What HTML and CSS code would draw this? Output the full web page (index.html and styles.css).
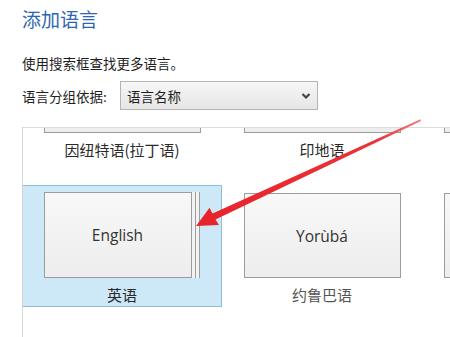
FILE: index.html
```html
<html>
    <head>
        <link rel="stylesheet" href="styles.css">
    </head>
    <body>
        <h1 class="title">添加语言</h1>
        <p class="hint">使用搜索框查找更多语言。</p>
        <div class="group_row">
            <span class="group_label">语言分组依据:</span>
            <div class="select">
                <span>语言名称</span>
                <svg class="chevron" width="10" height="8" viewBox="0 0 10 8">
                    <polyline points="1.5,2 5,5.5 8.5,2" fill="none" stroke="#444" stroke-width="2.2"/>
                </svg>
            </div>
        </div>

        <div class="lang_list">
            <div class="lang_grid">
                <div class="tile">
                    <div class="card"></div>
                    <div class="name">因纽特语(拉丁语)</div>
                </div>
                <div class="tile">
                    <div class="card"></div>
                    <div class="name">印地语</div>
                </div>
                <div class="tile">
                    <div class="card"></div>
                    <div class="name"></div>
                </div>
                <div class="tile selected">
                    <div class="card stacked">English</div>
                    <div class="name">英语</div>
                </div>
                <div class="tile">
                    <div class="card">Yorùbá</div>
                    <div class="name faded">约鲁巴语</div>
                </div>
                <div class="tile">
                    <div class="card"></div>
                    <div class="name"></div>
                </div>
            </div>
        </div>

        <!-- red arrow drawn over the list -->
        <svg class="arrow" width="450" height="337" viewBox="0 0 450 337">
            <defs>
                <linearGradient id="fade" x1="196" y1="225" x2="421" y2="120" gradientUnits="userSpaceOnUse">
                    <stop offset="0" stop-color="#e8232a"/>
                    <stop offset="0.8" stop-color="#ea3238"/>
                    <stop offset="1" stop-color="#f27d84"/>
                </linearGradient>
            </defs>
            <polygon fill="url(#fade)" points="196,226 219,225 215.5,219.5 421,121 420.4,119.2 212.5,213.6 209.5,207.8"/>
        </svg>
    </body>
</html>
```

FILE: styles.css
```css
body {
    margin: 0;
    padding: 6px 0 0 22px;
    background-color: #ffffff;
    color: #1e1e1e;
    font-family: "Noto Sans CJK SC", "Noto Sans", sans-serif;
    overflow: hidden;
}

.title {
    margin: 0;
    font-size: 19px;
    line-height: 26px;
    font-weight: normal;
    color: #2e66b1;
}

.hint {
    margin: 21px 0 0 0;
    font-size: 13.5px;
    line-height: 20px;
}

.group_row {
    display: flex;
    align-items: center;
    margin-top: 8px;
    font-size: 13.5px;
}

.group_label {
    width: 98px;
}

.select {
    display: flex;
    align-items: center;
    justify-content: space-between;
    box-sizing: border-box;
    width: 198px;
    height: 29px;
    padding: 0 6px 0 6px;
    border: 1px solid #b4b4b4;
    background: linear-gradient(#f6f6f6, #e6e6e6);
    font-size: 13.5px;
}

.lang_list {
    margin-top: 17px;
    height: 220px;
    overflow: hidden;
    border-top: 1px solid #dcdcdc;
    border-left: 1px solid #d4d4d4;
}

.lang_grid {
    display: grid;
    grid-template-columns: repeat(3, 200px);
    grid-auto-rows: 122px;
    row-gap: 23px;
    margin-top: -88px;
    margin-left: -1px;
}

.tile {
    display: flex;
    flex-direction: column;
    align-items: center;
    box-sizing: border-box;
    padding-top: 7px;
    border: 1px solid transparent;
}

.tile.selected {
    background-color: #cde8f7;
    border-color: #8bbfd8;
    padding-top: 6px;
}

.card {
    display: flex;
    align-items: center;
    justify-content: center;
    box-sizing: border-box;
    width: 157px;
    height: 87px;
    border: 1px solid #9c9c9c;
    background: linear-gradient(#f8f8f8, #ededed);
    font-family: "Open Sans", sans-serif;
    font-size: 15.5px;
    color: #333333;
}

.card.stacked {
    width: 148px;
    margin-right: 9px;
    box-shadow: 3px 0 0 0 #f2f2f2, 4px 0 0 0 #9c9c9c, 7px 0 0 0 #f2f2f2, 8px 0 0 0 #9c9c9c;
}

.name {
    box-sizing: border-box;
    height: 28px;
    padding-top: 6px;
    font-size: 15px;
    line-height: 22px;
    color: #2a2a2a;
}

.name.faded {
    color: #555555;
}

.arrow {
    position: absolute;
    left: 0;
    top: 0;
}
```
